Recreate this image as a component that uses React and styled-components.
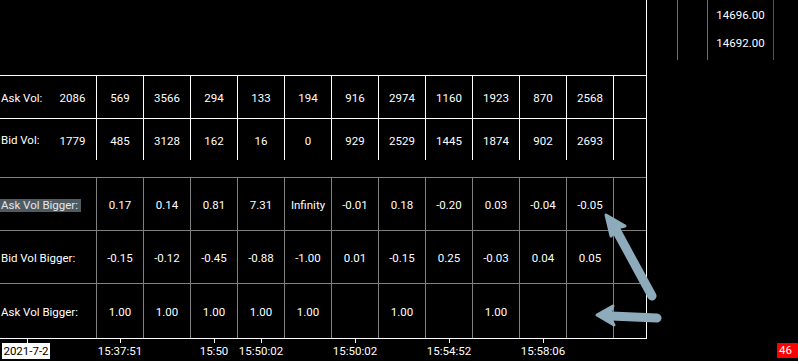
import React from 'react'
import styled, {createGlobalStyle} from 'styled-components'

const Global = createGlobalStyle`
  html, body {
    margin: 0;
    padding: 0;
    background: #000;
  }
`

const Page = styled.div`
  position: relative;
  width: 798px;
  height: 361px;
  overflow: hidden;
  background: #000;
  color: #fff;
  font-family: Roboto, "Liberation Sans", sans-serif;
  font-size: 11.5px;
  display: flex;
  flex-direction: column;
`

const Main = styled.div`
  display: flex;
  height: 339px;
`

const Chart = styled.div`
  box-sizing: border-box;
  width: 647px;
  height: 339px;
  border-right: 1px solid #fff;
  border-bottom: 1px solid #fff;
  padding-top: 75px;
  display: flex;
  flex-direction: column;
`

const VolRow = styled.div`
  box-sizing: border-box;
  display: flex;
  height: ${p => p.$h}px;
  border-top: ${p => (p.$top ? '1px solid #fff' : 'none')};
`

const RatioTable = styled.div`
  margin-top: ${p => p.$gap}px;
  display: flex;
  flex-direction: column;
  flex: 1;
`

const RatioRow = styled.div`
  box-sizing: border-box;
  display: flex;
  height: ${p => (p.$h ? `${p.$h}px` : 'auto')};
  flex: ${p => (p.$h ? 'none' : 1)};
  border-top: 1px solid #808080;
`

const Label = styled.div`
  box-sizing: border-box;
  width: ${p => p.$w}px;
  display: flex;
  align-items: center;
  padding: 2px 0 0 0;
  white-space: nowrap;
`

const Tag = styled.span`
  padding: 0 3px 0 1px;
  line-height: 13px;
  background: ${p => (p.$active ? '#4e5b62' : 'transparent')};
  color: ${p => (p.$active ? '#e6e6e6' : '#fff')};
`

const Cell = styled.div`
  box-sizing: border-box;
  width: ${p => p.$w || 47}px;
  display: flex;
  align-items: center;
  justify-content: center;
  padding-top: 2px;
  border-left: ${p => (p.$line ? `1px solid ${p.$line}` : 'none')};
  white-space: nowrap;
`

const PricePane = styled.div`
  flex: 1;
  display: flex;
  align-items: flex-start;
`

const LadderCol = styled.div`
  box-sizing: border-box;
  width: ${p => p.$w}px;
  height: 60px;
  border-left: ${p => (p.$line ? `1px solid ${p.$line}` : 'none')};
  padding-top: 1px;
`

const Price = styled.div`
  height: 28px;
  line-height: 28px;
  text-align: center;
`

const Axis = styled.div`
  position: relative;
  flex: 1;
`

const Tick = styled.div`
  position: absolute;
  top: 0;
  left: ${p => p.$x}px;
  width: 1px;
  height: 4px;
  background: #fff;
`

const TickLabel = styled.span`
  position: absolute;
  top: 4px;
  left: ${p => p.$x}px;
  transform: translateX(-50%);
  line-height: 16px;
  white-space: nowrap;
`

const DateLabel = styled.span`
  position: absolute;
  top: 4px;
  left: 2px;
  width: 48px;
  line-height: 16px;
  text-align: center;
  background: #fff;
  color: #000;
`

const CountBadge = styled.span`
  position: absolute;
  top: 4px;
  left: 777px;
  right: 0;
  padding: 0 0 0 2px;
  line-height: 15px;
  background: #ff0000;
  color: #fff;
  white-space: nowrap;
`

const Overlay = styled.svg`
  position: absolute;
  left: 0;
  top: 0;
  pointer-events: none;
`

const askVol = [2086, 569, 3566, 294, 133, 194, 916, 2974, 1160, 1923, 870, 2568]
const bidVol = [1779, 485, 3128, 162, 16, 0, 929, 2529, 1445, 1874, 902, 2693]

const ratios = [
  {
    label: 'Ask Vol Bigger:',
    active: true,
    h: 53,
    values: ['0.17', '0.14', '0.81', '7.31', 'Infinity', '-0.01', '0.18', '-0.20', '0.03', '-0.04', '-0.05'],
  },
  {
    label: 'Bid Vol Bigger:',
    h: 53,
    values: ['-0.15', '-0.12', '-0.45', '-0.88', '-1.00', '0.01', '-0.15', '0.25', '-0.03', '0.04', '0.05'],
  },
  {
    label: 'Ask Vol Bigger:',
    values: ['1.00', '1.00', '1.00', '1.00', '1.00', '', '1.00', '', '1.00', '', ''],
  },
]

const ticks = [
  {x: 120, t: '15:37:51'},
  {x: 214, t: '15:50'},
  {x: 261, t: '15:50:02'},
  {x: 355, t: '15:50:02'},
  {x: 449, t: '15:54:52'},
  {x: 543, t: '15:58:06'},
]

const VolLine = ({label, values, h, top}) => (
  <VolRow $h={h} $top={top}>
    <Label $w={49}>
      <Tag>{label}</Tag>
    </Label>
    {values.map((v, i) => (
      <Cell key={i} $line={i > 0 ? '#fff' : null}>
        {v}
      </Cell>
    ))}
    <Cell $w={33} $line="#fff" />
  </VolRow>
)

const Arrows = () => (
  <Overlay width="798" height="361" viewBox="0 0 798 361">
    <g fill="#8eabbb" stroke="#8eabbb" strokeLinecap="round" strokeLinejoin="round">
      <line x1="652" y1="296" x2="615" y2="228" strokeWidth="9" />
      <path d="M606 215 L625 226 L617 228 L611 236 Z" strokeWidth="3" />
      <path d="M657 318 L611 316" strokeWidth="9" fill="none" />
      <path d="M597 315 L613 306 L609 316 L614 325 Z" strokeWidth="3" />
    </g>
  </Overlay>
)

export default function App() {
  return (
    <Page>
      <Global />
      <Main>
        <Chart>
          <VolLine label="Ask Vol:" values={askVol} h={43} top />
          <VolLine label="Bid Vol:" values={bidVol} h={42} top />
          <RatioTable $gap={17}>
            {ratios.map((r, i) => (
              <RatioRow key={i} $h={r.h}>
                <Label $w={96}>
                  <Tag $active={r.active}>{r.label}</Tag>
                </Label>
                {r.values.map((v, j) => (
                  <Cell key={j} $line="#808080">
                    {v}
                  </Cell>
                ))}
                <Cell $w={33} $line="#808080" />
              </RatioRow>
            ))}
          </RatioTable>
        </Chart>
        <PricePane>
          <LadderCol $w={30} />
          <LadderCol $w={30} $line="#10b010" />
          <LadderCol $w={66} $line="#10b010">
            <Price>14696.00</Price>
            <Price>14692.00</Price>
          </LadderCol>
          <LadderCol $w={25} $line="#c82020" />
        </PricePane>
      </Main>
      <Axis>
        <Tick $x={27} />
        <DateLabel>2021-7-2</DateLabel>
        {ticks.map((t, i) => (
          <React.Fragment key={i}>
            <Tick $x={t.x} />
            <TickLabel $x={t.x}>{t.t}</TickLabel>
          </React.Fragment>
        ))}
        <CountBadge>46</CountBadge>
      </Axis>
      <Arrows />
    </Page>
  )
}
